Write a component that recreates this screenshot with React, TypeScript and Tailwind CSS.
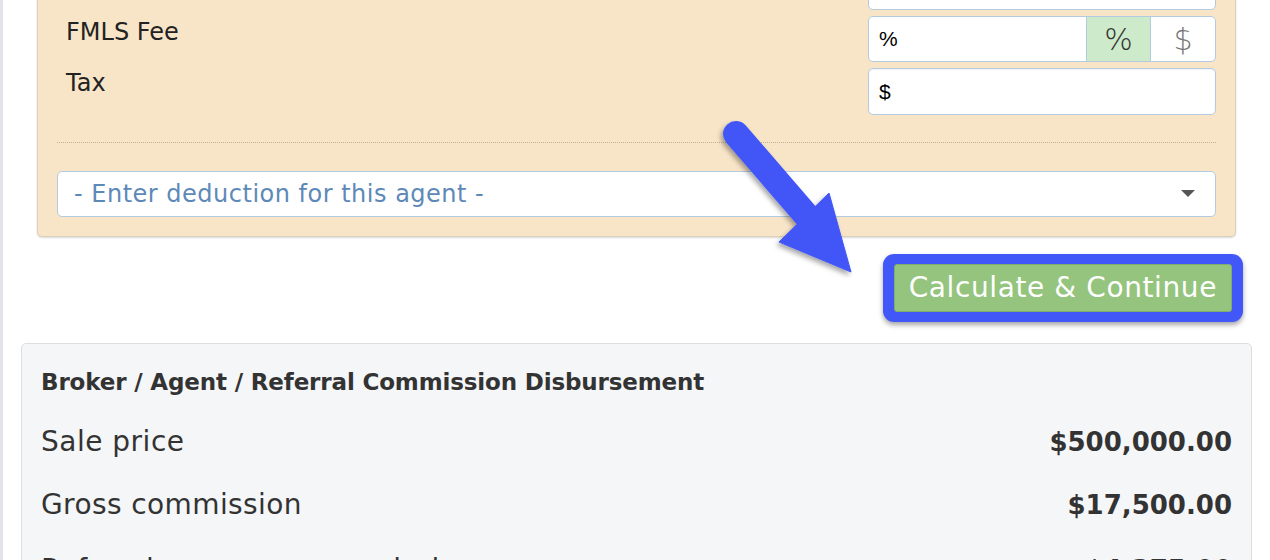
import React from "react";

const poppins = { fontFamily: '"DejaVu Sans", "Noto Sans", sans-serif' };

export default function App() {
  return (
    <div className="relative w-[1270px] h-[560px] overflow-hidden bg-white flex" style={poppins}>
      <div className="w-[3px] shrink-0 bg-[#e4e3e9]" />
      <div className="flex-1 flex flex-col px-[18px]">
        {/* Orange card */}
        <div className="shrink-0 mx-[16px] -mt-[60px] bg-[#f8e5c8] border border-[#ddd0b8] rounded-[5px] shadow-[0_1px_2px_rgba(0,0,0,0.15)] px-[19px] pt-[23px] pb-[19px]">
          <div className="flex flex-col gap-[6px]">
            <div className="flex justify-end">
              <div className="w-[348px] h-[46px] bg-white border border-[#b3cbe0] rounded-[5px]" />
            </div>
            <div className="flex justify-between">
              <div className="pl-[9px] pt-[2px] text-[24px] leading-[28px] text-[#222]">FMLS Fee</div>
              <div className="w-[348px] h-[46px] flex bg-white border border-[#b3cbe0] rounded-[5px] overflow-hidden">
                <div className="flex-1 flex items-center pl-[10px] text-[21px] text-black" style={{ fontFamily: '"Liberation Sans", Arial, sans-serif' }}>%</div>
                <div className="w-[65px] flex items-center justify-center bg-[#cdeacb] border-x border-[#b3cbe0] text-[30px] text-[#333] font-light">%</div>
                <div className="w-[64px] flex items-center justify-center text-[30px] text-[#777] font-light">$</div>
              </div>
            </div>
            <div className="flex justify-between">
              <div className="pl-[9px] pt-[1px] text-[24px] leading-[28px] text-[#222]">Tax</div>
              <div className="w-[348px] h-[47px] flex items-center pl-[10px] bg-white border border-[#b3cbe0] rounded-[5px] shadow-[inset_0_1px_2px_rgba(0,0,0,0.06)] text-[21px] text-black" style={{ fontFamily: '"Liberation Sans", Arial, sans-serif' }}>$</div>
            </div>
          </div>
          <div className="mt-[27px] border-t border-dotted border-[#c8b08e]" />
          <div className="mt-[28px] h-[46px] flex items-center justify-between bg-white border border-[#b3cbe0] rounded-[5px] pl-[16px] pr-[20px]">
            <span className="text-[24px] tracking-[0.5px] text-[#5d89b8]">- Enter deduction for this agent -</span>
            <svg width="14" height="8" viewBox="0 0 14 8"><path d="M0 0H14L7 7Z" fill="#555" /></svg>
          </div>
        </div>

        {/* Button */}
        <div className="shrink-0 flex justify-end pr-[9px] mt-[17px]">
          <div className="rounded-[11px] bg-[#4257f8] px-[11px] py-[10px] shadow-[0_3px_5px_rgba(0,0,0,0.35)]">
            <div className="h-[48px] px-[14px] flex items-center bg-[#94c47d] border border-[#7fae69] rounded-[3px] text-white text-[28px] tracking-[0.6px] leading-none">
              Calculate &amp; Continue
            </div>
          </div>
        </div>

        {/* Disbursement card */}
        <div className="shrink-0 mt-[21px] bg-[#f5f6f8] border border-[#dedede] rounded-[5px] px-[19px] pt-[23px] pb-[20px]">
          <div className="text-[23px] tracking-[-0.15px] leading-[30px] font-semibold text-[#333]">Broker / Agent / Referral Commission Disbursement</div>
          <div className="mt-[27px] flex justify-between items-center leading-[36px] text-[#333]">
            <span className="text-[28px] tracking-[0.5px]">Sale price</span>
            <span className="text-[26px] font-bold">$500,000.00</span>
          </div>
          <div className="mt-[27px] flex justify-between items-center leading-[36px] text-[#333]">
            <span className="text-[28px] tracking-[0.4px]">Gross commission</span>
            <span className="text-[26px] font-bold">$17,500.00</span>
          </div>
          <div className="mt-[29px] flex justify-between items-center leading-[36px] text-[#333]">
            <span className="text-[28px] tracking-[0.4px]">Referral company commission</span>
            <span className="text-[26px] font-bold">$4,375.00</span>
          </div>
        </div>
      </div>

      {/* Arrow overlay */}
      <svg className="absolute left-0 top-0 pointer-events-none" width="1270" height="560">
        <defs>
          <filter id="sh" x="-20%" y="-20%" width="140%" height="140%">
            <feDropShadow dx="-2" dy="3" stdDeviation="2.5" floodColor="#000" floodOpacity="0.35" />
          </filter>
        </defs>
        <g filter="url(#sh)" fill="#4257f8" stroke="#4257f8">
          <line x1="736" y1="134" x2="812" y2="222" strokeWidth="26" strokeLinecap="round" />
          <polygon points="779,242 829,193 851,272" strokeWidth="1" strokeLinejoin="round" />
        </g>
      </svg>
    </div>
  );
}
